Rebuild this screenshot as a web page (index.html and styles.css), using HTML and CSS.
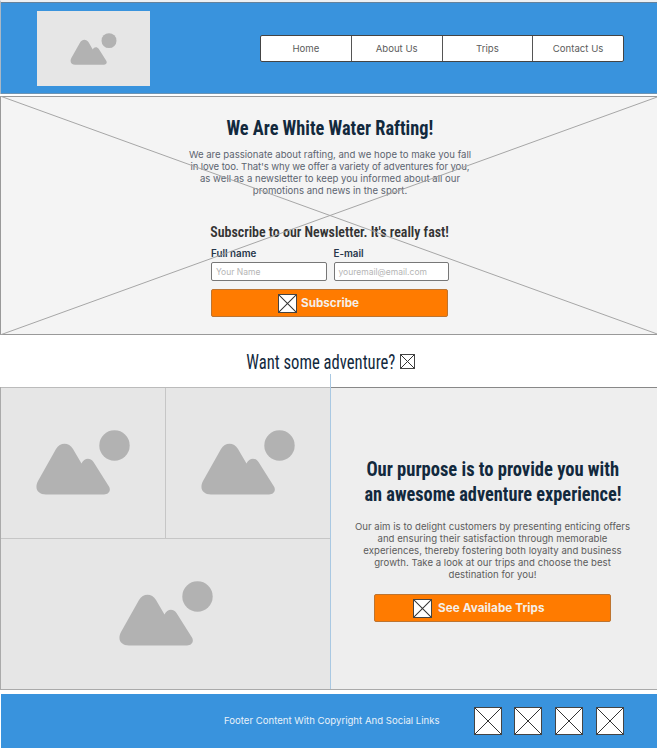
FILE: index.html
```html
<!DOCTYPE html>
<html lang="en">
<head>
<meta charset="utf-8">
<title>White Water Rafting</title>
<link rel="stylesheet" href="styles.css">
</head>
<body>
<svg class="defs" aria-hidden="true">
  <symbol id="picture" viewBox="0 0 94 65">
    <path d="M20 19C24 12 33 12 37 19L45.500 33.500C48 28 54 27 57.500 32L72 55C76 60 73 64.500 68 64.500H10C2 64.500 -2 59 2 51Z"/>
    <circle cx="78.500" cy="15.500" r="15.200"/>
  </symbol>
  <symbol id="cross" viewBox="0 0 20 20" preserveAspectRatio="none">
    <path d="M0 0L20 20M20 0L0 20" vector-effect="non-scaling-stroke"/>
  </symbol>
</svg>

<header class="header">
  <div class="logo"><svg class="picture"><use href="#picture"/></svg></div>
  <nav class="nav">
    <a>Home</a><a>About Us</a><a>Trips</a><a>Contact Us</a>
  </nav>
</header>

<section class="hero">
  <h1 class="title"><span>We Are White Water Rafting!</span></h1>
  <p class="copy">We are passionate about rafting, and we hope to make you fall<br><span class="tight">in love too. That's why we offer a variety of adventures for you,</span><br>as well as a newsletter to keep you informed about all our<br>promotions and news in the sport.</p>
  <h2 class="subtitle"><span>Subscribe to our Newsletter. It's really fast!</span></h2>
  <form class="form">
    <div class="fields">
      <label class="field">Full name<span class="input">Your Name</span></label>
      <label class="field">E-mail<span class="input">youremail@email.com</span></label>
    </div>
    <div class="button"><svg class="icon"><use href="#cross"/></svg>Subscribe</div>
  </form>
  <svg class="hero-lines" viewBox="0 0 660 239" preserveAspectRatio="none"><path d="M0 0L660 239M660 0L0 239"/></svg>
</section>

<div class="adventure">
  <h2 class="question"><span>Want some adventure?</span></h2>
  <svg class="icon small"><use href="#cross"/></svg>
  <i class="guide"></i>
</div>

<main class="main">
  <div class="gallery">
    <div class="tile"><svg class="picture"><use href="#picture"/></svg></div>
    <div class="tile second"><svg class="picture"><use href="#picture"/></svg></div>
    <div class="tile wide"><svg class="picture"><use href="#picture"/></svg></div>
  </div>
  <section class="purpose">
    <h2 class="title"><span class="loose">Our purpose is to provide you with</span><br><span>an awesome adventure experience!</span></h2>
    <p class="copy">Our aim is to delight customers by presenting enticing offers<br>and ensuring their satisfaction through memorable<br>experiences, thereby fostering both loyalty and business<br>growth. Take a look at our trips and choose the best<br>destination for you!</p>
    <div class="button trips"><svg class="icon"><use href="#cross"/></svg>See Availabe Trips</div>
  </section>
</main>

<footer class="footer">
  <span>Footer Content With Copyright And Social Links</span>
  <div class="social">
    <svg class="icon"><use href="#cross"/></svg>
    <svg class="icon"><use href="#cross"/></svg>
    <svg class="icon"><use href="#cross"/></svg>
    <svg class="icon"><use href="#cross"/></svg>
  </div>
</footer>
</body>
</html>
```
FILE: styles.css
```css
* { box-sizing: border-box; }
body {
  margin: 0;
  width: 657px;
  height: 748px;
  overflow: hidden;
  display: flex;
  flex-direction: column;
  background: #fff;
  color: #5c5c5c;
  font: 400 9.6px/12px Inter, "Open Sans", sans-serif;
}
h1, h2, p { margin: 0; }
.defs { position: absolute; width: 0; height: 0; }

.header {
  height: 94px;
  flex: none;
  margin-bottom: 2px;
  padding: 0 33px 0 36px;
  display: flex;
  justify-content: space-between;
  align-items: center;
  background: #3993dd;
  border-top: 2px solid #edf0f3;
  border-left: 1px solid #a9b8c6;
  box-shadow: inset 0 1px #66829b, inset 0 -1px #6d94b4;
}
.logo {
  width: 113px;
  height: 75px;
  margin-top: 1px;
  display: flex;
  align-items: center;
  justify-content: center;
  background: #e6e6e6;
}
.picture { width: 94px; height: 65px; fill: #b2b2b2; overflow: visible; }
.logo .picture { width: 47px; height: 32px; }
.nav {
  width: 364px;
  height: 27px;
  margin-top: 1px;
  display: flex;
  background: #fff;
  border: 1px solid #444;
  border-radius: 2px;
}
.nav a {
  flex: 1;
  display: flex;
  align-items: center;
  justify-content: center;
}
.nav a + a { border-left: 1px solid #555; }

.hero {
  position: relative;
  height: 239px;
  flex: none;
  display: flex;
  flex-direction: column;
  align-items: center;
  padding: 19px 0 0 2px;
  background: #f4f4f4;
  border: solid #999;
  border-width: 1px 0 1px 1px;
}
.hero-lines {
  position: absolute;
  left: -1px;
  top: -1px;
  width: 660px;
  height: 239px;
  fill: none;
  stroke: #a6a6a6;
}
.title, .subtitle, .question {
  font-family: Roboto, sans-serif;
  font-stretch: 75%;
  white-space: nowrap;
}
.title span, .subtitle span, .question span { display: inline-block; }
.title { font-weight: 700; font-size: 20.5px; line-height: 25px; color: #12293d; text-align: center; }
.title span { transform: scaleX(.893); }
.title .loose { transform: scaleX(.904); }
.copy { text-align: center; white-space: nowrap; }
.copy .tight { letter-spacing: -.12px; }
.hero .copy { margin-top: 8px; color: #5c6470; }
.subtitle { margin-top: 25px; font-weight: 600; font-size: 15px; line-height: 20px; color: #333; }
.subtitle span { transform: scaleX(.928); }
.form { width: 238px; margin-top: 6px; }
.fields { display: flex; gap: 7px; }
.field { flex: 1; font-weight: 600; font-size: 9.8px; color: #26364a; }
.input {
  display: flex;
  align-items: center;
  height: 19px;
  margin-top: 2px;
  padding-left: 4px;
  background: #fff;
  border: 1px solid #777;
  border-radius: 2px;
  color: #b5b5b5;
  font-weight: 400;
  font-size: 8.5px;
}
.button {
  height: 28px;
  width: 237px;
  margin-top: 8px;
  padding-left: 66px;
  display: flex;
  align-items: center;
  gap: 4px;
  background: #ff7b00;
  border: 1px solid #bd7430;
  border-radius: 2px;
  color: #f5efe9;
  font-weight: 700;
  font-size: 11.7px;
  white-space: nowrap;
}
.icon {
  width: 19px;
  height: 19px;
  flex: none;
  background: #fff;
  border: 1px solid #444;
  stroke: #333;
  stroke-width: 1px;
  fill: none;
}

.adventure {
  position: relative;
  height: 52px;
  flex: none;
  display: flex;
  align-items: center;
  justify-content: center;
  gap: 5px;
  padding: 1px 0 0 4px;
}
.question { width: 149px; display: flex; justify-content: center; font-weight: 400; font-size: 20.5px; line-height: 26px; color: #12293d; }
.question span { flex: none; transform: scaleX(.812); }
.icon.small { width: 15px; height: 15px; }
.guide {
  position: absolute;
  left: 330px;
  top: 39px;
  width: 1px;
  height: 315px;
  background: #a9c8e2;
  z-index: 1;
}

.main {
  height: 303px;
  flex: none;
  display: grid;
  grid-template-columns: 329px 1fr;
  border-left: 1px solid #aaa;
  border-bottom: 1px solid #aaa;
}
.gallery {
  display: grid;
  grid-template: 151px 150px / 164px 1fr;
  background: #e6e6e6;
  border-top: 1px solid #bbb;
}
.tile {
  display: flex;
  align-items: center;
  justify-content: center;
  padding-bottom: 1px;
  border-bottom: 1px solid #c6c6c6;
}
.tile.second { border-left: 1px solid #c6c6c6; }
.tile.wide { grid-column: 1 / 3; border: 0; }
.purpose {
  display: flex;
  flex-direction: column;
  align-items: center;
  padding: 69px 2px 0 0;
  background: #eee;
  border-top: 1px solid #888;
}
.purpose .copy { margin-top: 13.5px; letter-spacing: .025px; }
.button.trips { margin-top: 13.5px; padding-left: 38px; gap: 6px; letter-spacing: .08px; }

.footer {
  height: 54px;
  flex: none;
  margin: 4px 0 0 1px;
  padding-right: 33px;
  display: flex;
  align-items: center;
  justify-content: flex-end;
  gap: 34px;
  background: #3993dd;
  color: #e8f1f9;
}
.social { display: flex; gap: 12.800px; }
.social .icon { width: 28px; height: 28px; }
```
